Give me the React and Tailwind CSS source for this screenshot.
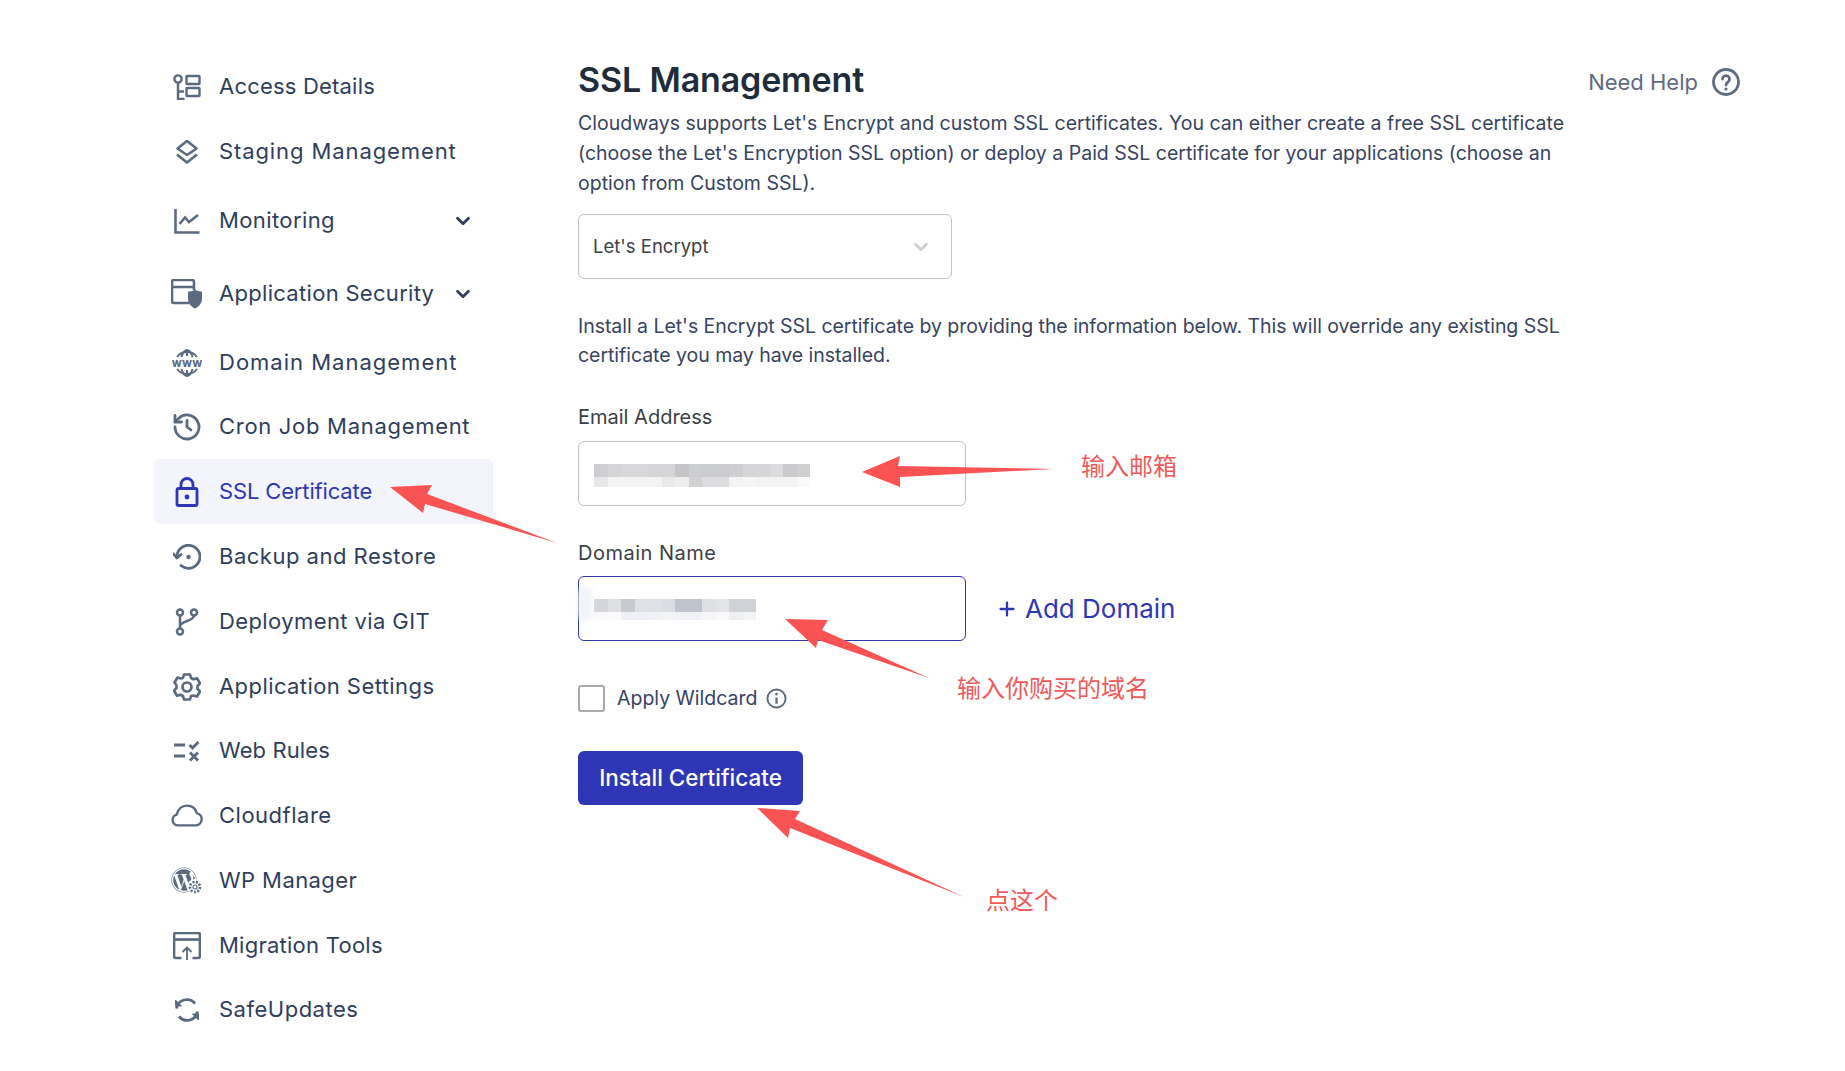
import { ChevronDown, Plus } from "lucide-react";
import { FaWordpress } from "react-icons/fa";

const font = "font-['Inter','Noto_Sans_CJK_SC',sans-serif]";

const AccessIcon = () => (
  <svg viewBox="0 0 28 26" className="w-[28px] h-[26px]" fill="none" stroke="currentColor" strokeWidth="2.4">
    <circle cx="5" cy="5" r="3.6" />
    <path d="M5 9v16h6.500M5 17.500h6" />
    <rect x="13.500" y="2" width="13" height="8" rx="0.5" />
    <rect x="13.500" y="14" width="13" height="8" rx="0.5" />
  </svg>
);

const LayersIcon = () => (
  <svg viewBox="0 0 26 26" className="w-[26px] h-[26px]" fill="none" stroke="currentColor" strokeWidth="2.6" strokeLinejoin="round">
    <path d="M13 2 22.500 9.500 13 16 3.500 9.500Z" />
    <path d="M3 15.500 13 23.500 23 15.500" />
  </svg>
);

const ChartIcon = () => (
  <svg viewBox="0 0 26 26" className="w-[26px] h-[26px]" fill="none" stroke="currentColor" strokeWidth="2.6">
    <path d="M1.500 1v23.500h24" />
    <path d="M5.500 16 11 9.500l4 4.500 9-7" />
  </svg>
);

const AppSecurityIcon = () => (
  <svg viewBox="0 0 32 30" className="w-[32px] h-[30px]" fill="none" stroke="currentColor" strokeWidth="2.6">
    <path d="M18 24H3a2 2 0 0 1-2-2V3a2 2 0 0 1 2-2h18a2 2 0 0 1 2 2v8M1 8h22" />
    <path d="M24 10.500c2 1.500 4 2 7 2v7c0 5-3 8-7 10-4-2-7-5-7-10v-7c3 0 5-.5 7-2Z" fill="currentColor" stroke="none" />
  </svg>
);

const GlobeIcon = () => (
  <svg viewBox="0 0 30 30" className="w-[30px] h-[30px]" fill="none" stroke="currentColor" strokeWidth="2">
    <path d="M5 9A12.500 12.500 0 0 1 25 9M5 21A12.500 12.500 0 0 0 25 21" />
    <path d="M15 2v6M15 22v6M9.500 9C10.500 5 12.500 2.500 15 2c2.500.5 4.500 3 5.500 7M9.500 21c1 4 3 6.500 5.500 7 2.500-.5 4.500-3 5.500-7" />
    <text x="15" y="18.500" textAnchor="middle" fontSize="9.500" fontWeight="800" fill="currentColor" stroke="none">WWW</text>
  </svg>
);

const CronIcon = () => (
  <svg viewBox="0 0 28 28" className="w-[28px] h-[28px]" fill="none" stroke="currentColor" strokeWidth="2.800" strokeLinecap="round" strokeLinejoin="round">
    <path d="M2 14a12 12 0 1 0 3.500-8.500L2 9" />
    <path d="M2 2.500V9h6.500" />
    <path d="M14 7.500V14l4 3" />
  </svg>
);

const LockIcon = () => (
  <svg viewBox="0 0 24 30" className="w-[24px] h-[30px]" fill="none" stroke="currentColor" strokeWidth="2.800" strokeLinejoin="round">
    <rect x="2" y="11.500" width="20" height="17" rx="1.500" />
    <path d="M6 11.500V7.500a6 6 0 0 1 12 0v4" />
    <circle cx="12" cy="20" r="2.400" fill="currentColor" stroke="none" />
  </svg>
);

const BackupIcon = () => (
  <svg viewBox="0 0 28 26" className="w-[28px] h-[26px]" fill="none" stroke="currentColor" strokeWidth="2.800" strokeLinecap="round" strokeLinejoin="round">
    <path d="M4 13A11.500 11.500 0 1 1 8 21.500" />
    <path d="M0.500 10 4 14 8 10.500" />
    <circle cx="15.500" cy="13" r="2.200" fill="currentColor" stroke="none" />
  </svg>
);

const GitIcon = () => (
  <svg viewBox="0 0 24 28" className="w-[24px] h-[28px]" fill="none" stroke="currentColor" strokeWidth="2.500">
    <circle cx="5" cy="4.500" r="3" />
    <circle cx="19" cy="4.500" r="3" />
    <circle cx="5" cy="23.500" r="3" />
    <path d="M5 7.500v13M19 7.500c0 6-14 5-14 11" />
  </svg>
);

const GearIcon = () => (
  <svg viewBox="0 0 28 28" className="w-[28px] h-[28px]" fill="none" stroke="currentColor" strokeWidth="2.700" strokeLinejoin="round">
    <path d="M11 1.500h6l1 3.500 2.500 1.300 3.500-1 3 5-2.500 2.700v2.800l2.500 2.700-3 5-3.500-1L18 23l-1 3.500h-6L10 23l-2.500-1.300-3.500 1-3-5 2.500-2.700v-2.800L1.500 9.500l3-5 3.500 1L10 5Z" />
    <circle cx="14" cy="14" r="4.500" />
  </svg>
);

const RulesIcon = () => (
  <svg viewBox="0 0 28 22" className="w-[28px] h-[22px]" fill="none" stroke="currentColor" strokeWidth="3">
    <path d="M1 5h11M1 16h11" />
    <path d="M16.500 5l3 3 6-6" />
    <path d="M17 12.500l8 8M25 12.500l-8 8" />
  </svg>
);

const CloudIcon = () => (
  <svg viewBox="0 0 34 24" className="w-[32px] h-[23px]" fill="none" stroke="currentColor" strokeWidth="2.600" strokeLinejoin="round">
    <path d="M7.500 22.500a5.800 5.800 0 0 1-1.500-11.400C7.500 5 12 1.500 17 1.500c5 0 9 3 10.500 8a6.600 6.600 0 0 1-1 13Z" />
  </svg>
);

const WpIcon = () => (
  <div className="relative w-[32px] h-[28px]">
    <FaWordpress className="w-[26px] h-[26px]" />
    <svg viewBox="0 0 16 16" className="absolute right-0 bottom-0 w-[16px] h-[16px] bg-white rounded-full" fill="none" stroke="currentColor">
      <circle cx="8" cy="8" r="5" strokeWidth="2.600" strokeDasharray="2 1.400" />
      <circle cx="8" cy="8" r="2" strokeWidth="1.200" />
    </svg>
  </div>
);

const MigrationIcon = () => (
  <svg viewBox="0 0 28 28" className="w-[28px] h-[28px]" fill="none" stroke="currentColor" strokeWidth="2.700">
    <path d="M8.500 26H3a2 2 0 0 1-2-2V3a2 2 0 0 1 2-2h22a2 2 0 0 1 2 2v21a2 2 0 0 1-2 2h-5.500" />
    <path d="M1 7.500h26" />
    <path d="M14 28V16M9.500 20l4.500-4.500 4.500 4.500" strokeWidth="1.800" />
  </svg>
);

const SyncIcon = () => (
  <svg viewBox="0 0 26 26" className="w-[26px] h-[26px]" fill="none" stroke="currentColor" strokeWidth="2.800" strokeLinejoin="round">
    <path d="M2.500 11.500A10.500 10.500 0 0 1 21 6.500" />
    <path d="M23.500 14.500A10.500 10.500 0 0 1 5 19.500" />
    <path d="M1.500 3l6 6h-6ZM24.500 23l-6-6h6Z" fill="currentColor" strokeWidth="1" />
  </svg>
);

const NAV = [
  { label: "Access Details", Icon: AccessIcon, gap: "mt-0", track: "tracking-[0.2px]" },
  { label: "Staging Management", Icon: LayersIcon, gap: "mt-0", track: "tracking-[0.9px]" },
  { label: "Monitoring", Icon: ChartIcon, gap: "mt-1", caret: true, track: "tracking-[0.4px]" },
  { label: "Application Security", Icon: AppSecurityIcon, gap: "mt-2", caret: true, track: "tracking-[0.3px]" },
  { label: "Domain Management", Icon: GlobeIcon, gap: "mt-1", track: "tracking-[1px]" },
  { label: "Cron Job Management", Icon: CronIcon, gap: "-mt-px", track: "tracking-[0.7px]" },
  { label: "SSL Certificate", Icon: LockIcon, gap: "mt-0", active: true, track: "tracking-[-0.15px]" },
  { label: "Backup and Restore", Icon: BackupIcon, gap: "mt-0", track: "tracking-[0.5px]" },
  { label: "Deployment via GIT", Icon: GitIcon, gap: "mt-0", track: "tracking-[0.4px]" },
  { label: "Application Settings", Icon: GearIcon, gap: "mt-0", track: "tracking-[0.42px]" },
  { label: "Web Rules", Icon: RulesIcon, gap: "-mt-px", track: "tracking-[0.1px]" },
  { label: "Cloudflare", Icon: CloudIcon, gap: "mt-0", track: "tracking-[0.5px]" },
  { label: "WP Manager", Icon: WpIcon, gap: "mt-0", track: "tracking-[0.4px]" },
  { label: "Migration Tools", Icon: MigrationIcon, gap: "mt-0", track: "tracking-[0.25px]" },
  { label: "SafeUpdates", Icon: SyncIcon, gap: "-mt-px", track: "tracking-[0.5px]" },
];

// pixelated smear over the real address, darker on top, faded below
const EMAIL_TOP = ["bg-[#cfcfd1]", "bg-[#d5d5d7]", "bg-[#d8d8da]", "bg-[#d8d8da]", "bg-[#d5d5d7]", "bg-[#d5d5d7]", "bg-[#c4c5c7]", "bg-[#cdced0]", "bg-[#cbcccd]", "bg-[#cbcccd]", "bg-[#cfcfd1]", "bg-[#d6d6d8]", "bg-[#d6d6d8]", "bg-[#dcdcde]", "bg-[#cbcbcd]", "bg-[#cfcfd1]"];
const EMAIL_BOTTOM = ["bg-[#e8e8ea]", "bg-[#f3f3f4]", "bg-[#f3f3f4]", "bg-[#f3f3f4]", "bg-[#f3f3f4]", "bg-[#e9e9ea]", "bg-[#eeeeef]", "bg-[#d2d2d4]", "bg-[#dddddf]", "bg-[#dddddf]", "bg-[#f3f3f4]", "bg-[#f6f6f7]", "bg-[#f3f3f4]", "bg-[#f3f3f4]", "bg-[#f3f3f4]", "bg-[#fafafa]"];
const DOMAIN_TOP = ["bg-[#d5d6dc]", "bg-[#dfe0e4]", "bg-[#c8cad0]", "bg-[#dfe1e6]", "bg-[#dfe1e6]", "bg-[#dbdde2]", "bg-[#bfc3cc]", "bg-[#bfc3cc]", "bg-[#dfe0e4]", "bg-[#e3e4e8]", "bg-[#d0d2d7]", "bg-[#d0d2d7]"];
const DOMAIN_BOTTOM = ["bg-[#f9f9fb]", "bg-[#fbfbfc]", "bg-[#eff0f3]", "bg-[#eff0f3]", "bg-[#f1f2f5]", "bg-[#f3f4f6]", "bg-[#f1f2f5]", "bg-[#f1f2f5]", "bg-[#f6f6f8]", "bg-[#f9f9fb]", "bg-[#eff0f3]", "bg-[#f3f4f6]"];

const Smear = ({ top, bottom, bottomH }) => (
  <div className="flex flex-col">
    <div className="flex">
      {top.map((c, i) => <div key={i} className={`w-[13.5px] h-[13px] ${c}`} />)}
    </div>
    <div className="flex">
      {bottom.map((c, i) => <div key={i} className={`w-[13.5px] ${bottomH} ${c}`} />)}
    </div>
  </div>
);

const Arrows = () => (
  <svg className="absolute left-0 top-0 w-[1845px] h-[1071px] pointer-events-none" viewBox="0 0 1845 1071" fill="#f95353">
    <polygon points="390,487 432,485 427,494 557,543 425,504 423,513" />
    <polygon points="862,472 900,456 898,466 1054,469 900,477 900,487" />
    <polygon points="785,619 828,620 822,630 929,678 818,640 816,648" />
    <polygon points="757,808 800,811 795,819 964,897 790,828 788,838" />
  </svg>
);

const App = () => {
  return (
    <div className={`relative w-[1845px] h-[1071px] bg-white overflow-hidden flex ${font}`}>
      <aside className="w-[578px] shrink-0 pl-[154px] pt-[54px]">
        <nav className="w-[339px] flex flex-col">
          {NAV.map(({ label, Icon, gap, caret, active, track }) => (
            <div
              key={label}
              className={`flex items-center h-[65px] rounded-md ${gap} ${active ? "bg-[#f3f4fc] text-[#2f38b4]" : "text-[#2f3e5c]"}`}
            >
              <div className={`w-[65px] flex justify-center ${active ? "text-[#2f38b4]" : "text-[#5c6a80]"}`}>
                <Icon />
              </div>
              <span className={`text-[22px] whitespace-nowrap ${track}`}>{label}</span>
              {caret && <ChevronDown className="absolute left-[452px] w-[22px] h-[22px] text-[#2f3e5c]" strokeWidth={3} />}
            </div>
          ))}
        </nav>
      </aside>

      <main className="flex-1 pt-[56px]">
        <div className="flex justify-between w-[1162px]">
          <h1 className="text-[34px] leading-[48px] font-semibold text-[#1f2d3a] tracking-[-0.15px]">SSL Management</h1>
          <div className="flex items-center h-[52px] text-[#5f6b80]">
            <span className="text-[22px]">Need Help</span>
            <svg viewBox="0 0 28 28" className="w-[28px] h-[28px] ml-[14px]" fill="none" stroke="currentColor" strokeWidth="2.800">
              <circle cx="14" cy="14" r="12.500" />
              <path d="M10.500 11a3.500 3.500 0 1 1 5.500 3c-1.500 1-2 1.500-2 3" strokeLinecap="round" />
              <circle cx="14" cy="21" r="1.600" fill="currentColor" stroke="none" />
            </svg>
          </div>
        </div>

        <p className="text-[19.5px] leading-[30px] text-[#37435f] whitespace-nowrap">
          Cloudways supports Let's Encrypt and custom SSL certificates. You can either create a free SSL certificate
          <br />
          (choose the Let's Encryption SSL option) or deploy a Paid SSL certificate for your applications (choose an
          <br />
          option from Custom SSL).
        </p>

        <div className="mt-[16px] w-[374px] h-[65px] border border-[#c4c4c4] rounded-md flex items-center justify-between pl-[14px] pr-[19px] text-[#3b3f46]">
          <span className="text-[18.5px]">Let's Encrypt</span>
          <ChevronDown className="w-[22px] h-[22px] text-[#cfcfcf]" strokeWidth={3} />
        </div>

        <p className="mt-[33px] text-[19.5px] leading-[29px] tracking-[-0.04px] text-[#37435f] whitespace-nowrap">
          Install a Let's Encrypt SSL certificate by providing the information below. This will override any existing SSL
          <br />
          certificate you may have installed.
        </p>

        <label className="block mt-[33px] text-[20px] leading-[28px] text-[#3b3f46]">Email Address</label>
        <div className="mt-[10px] w-[388px] h-[65px] border border-[#c4c4c4] rounded-md flex items-center pl-[15px] pt-[4px]">
          <Smear top={EMAIL_TOP} bottom={EMAIL_BOTTOM} bottomH="h-[10px]" />
        </div>

        <label className="block mt-[33px] text-[20px] leading-[28px] tracking-[0.5px] text-[#3b3f46]">Domain Name</label>
        <div className="mt-[9px] flex items-center">
          <div className="relative w-[388px] h-[65px] border border-[#2f38b4] rounded-md flex items-center pl-[15px] pt-[2px]">
            <div className="absolute -left-px top-[10px] w-[15px] h-[34px] rounded-full bg-[#f3f3fa] blur-[2px]" />
            <Smear top={DOMAIN_TOP} bottom={DOMAIN_BOTTOM} bottomH="h-[8px]" />
          </div>
          <Plus className="ml-[30px] w-[22px] h-[22px] text-[#2f38b4]" strokeWidth={2.5} />
          <span className="ml-[7px] text-[26px] text-[#2f38b4]">Add Domain</span>
        </div>

        <div className="mt-[43px] flex items-center">
          <div className="w-[27px] h-[27px] border-2 border-[#a9a9ac] rounded-[3px]" />
          <span className="ml-[12px] text-[19.5px] text-[#37435f]">Apply Wildcard</span>
          <svg viewBox="0 0 22 22" className="ml-[9px] w-[21px] h-[21px] text-[#5c6a80]" fill="none" stroke="currentColor" strokeWidth="2">
            <circle cx="11" cy="11" r="9.500" />
            <path d="M11 10v6.500" strokeWidth="2.400" />
            <circle cx="11" cy="6.500" r="1.400" fill="currentColor" stroke="none" />
          </svg>
        </div>

        <button className="mt-[38px] w-[225px] h-[54px] rounded-md bg-[#2e36b6] text-white text-[22.5px] font-medium">
          Install Certificate
        </button>
      </main>

      <Arrows />
      <span className="absolute left-[1081px] top-[450px] text-[24px] leading-[34px] text-[#ee5a5a]">输入邮箱</span>
      <span className="absolute left-[957px] top-[672px] text-[24px] leading-[34px] text-[#ee5a5a]">输入你购买的域名</span>
      <span className="absolute left-[986px] top-[884px] text-[24px] leading-[34px] text-[#ee5a5a]">点这个</span>
    </div>
  );
};

export default App;
